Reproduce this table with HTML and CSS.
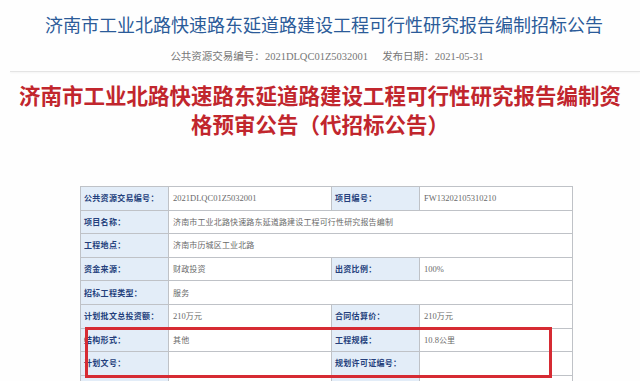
FILE: index.html
```html
<!DOCTYPE html>
<html lang="zh-CN">
<head>
<meta charset="utf-8">
<title>招标公告</title>
<link rel="stylesheet" href="styles.css">
</head>
<body>
<div class="page">
  <header class="head">
    <h1 class="title">济南市工业北路快速路东延道路建设工程可行性研究报告编制招标公告</h1>
    <p class="meta"><span class="meta-item">公共资源交易编号：<span class="num">2021DLQC01Z5032001</span></span><span class="meta-item">发布日期：<span class="num">2021-05-31</span></span></p>
  </header>
  <div class="rule"></div>
  <h2 class="red-title">济南市工业北路快速路东延道路建设工程可行性研究报告编制资<br>格预审公告（代招标公告）</h2>
  <div class="table-wrap">
    <table class="info">
      <colgroup><col class="c1"><col class="c2"><col class="c3"><col class="c4"></colgroup>
      <tr><th>公共资源交易编号：</th><td class="num">2021DLQC01Z5032001</td><th>项目编号：</th><td class="num">FW13202105310210</td></tr>
      <tr><th>项目名称：</th><td colspan="3">济南市工业北路快速路东延道路建设工程可行性研究报告编制</td></tr>
      <tr><th>工程地点：</th><td colspan="3">济南市历城区工业北路</td></tr>
      <tr><th>资金来源：</th><td>财政投资</td><th>出资比例：</th><td class="num">100%</td></tr>
      <tr><th>招标工程类型：</th><td colspan="3">服务</td></tr>
      <tr><th>计划批文总投资额：</th><td><span class="num">210</span>万元</td><th>合同估算价：</th><td><span class="num">210</span>万元</td></tr>
      <tr><th>结构形式：</th><td>其他</td><th>工程规模：</th><td><span class="num">10.8</span>公里</td></tr>
      <tr><th>计划文号：</th><td></td><th>规划许可证编号：</th><td></td></tr>
      <tr><th></th><td></td><th></th><td></td></tr>
    </table>
    <div class="highlight"></div>
  </div>
</div>
</body>
</html>
```

FILE: styles.css
```css
html, body {
  margin: 0;
  padding: 0;
  background: #fefefe;
}
body {
  font-family: "Noto Sans CJK SC", "Noto Sans", sans-serif;
  overflow: hidden;
  height: 381px;
}
.page {
  width: 640px;
}
.head {
  text-align: center;
  padding-top: 12px;
}
.title {
  margin: 0;
  padding-left: 8px;
  font-size: 18px;
  line-height: 24px;
  font-weight: 400;
  color: #2b5b99;
}
.meta {
  margin: 12px 0 0;
  font-size: 10.5px;
  line-height: 16px;
  color: #777;
  display: flex;
  justify-content: center;
  gap: 14px;
  padding-left: 14px;
}
.num {
  font-family: "Liberation Serif", serif;
}
.rule {
  margin: 6px 0 0 10px;
  height: 1px;
  background: #e4e4e4;
  box-shadow: 0 1px 2px rgba(0,0,0,0.06);
}
.red-title {
  margin: 8px 0 0;
  text-align: center;
  font-size: 21.5px;
  line-height: 29px;
  font-weight: 700;
  color: #c1262d;
}
.table-wrap {
  position: relative;
  margin: 48px 0 0 80px;
  width: 492px;
}
.info {
  border-collapse: collapse;
  width: 492px;
  table-layout: fixed;
}
.c1 { width: 88px; }
.c2 { width: 163px; }
.c3 { width: 88px; }
.c4 { width: 153px; }
.info tr { height: 23.6px; }
.info th, .info td {
  border: 1px solid #bfc2c7;
  padding: 0 3px;
  font-size: 8px;
  line-height: 10px;
  text-align: left;
  white-space: nowrap;
  overflow: hidden;
}
.info th {
  background: #e3edf8;
  color: #243f7c;
  font-weight: 700;
  letter-spacing: 0.3px;
}
.info td {
  background: #fff;
  color: #6a6a6a;
  padding-left: 4px;
  letter-spacing: 0.15px;
}
.info td.num, .info .num {
  font-size: 8.5px;
  letter-spacing: 0;
}
.highlight {
  position: absolute;
  left: 5px;
  top: 141px;
  width: 461px;
  height: 45px;
  border: 3px solid #d62b33;
  pointer-events: none;
}
```
